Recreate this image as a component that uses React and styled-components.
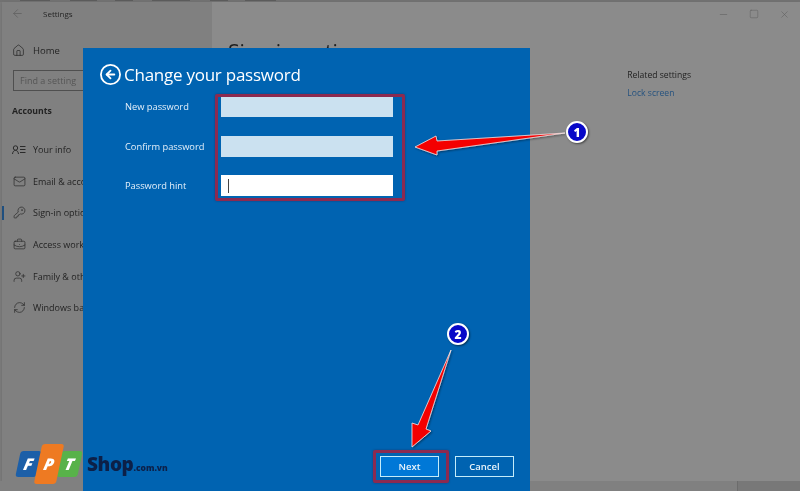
import React from "react";
import styled, { createGlobalStyle } from "styled-components";
import { Home, Mail, KeyRound, BriefcaseBusiness, UserPlus, RefreshCw, ArrowLeft, Minus, Square, X, CircleArrowLeft } from "lucide-react";

const Global = createGlobalStyle`
  html, body { margin: 0; padding: 0; background: #7b7b7b; }
  * { box-sizing: border-box; }
  body { font-family: "Open Sans", "Noto Sans", sans-serif; }
`;

const Page = styled.div`
  position: relative;
  width: 800px;
  height: 491px;
  overflow: hidden;
  background: #7b7b7b;
  display: flex;
  flex-direction: column;
  filter: blur(0.3px);
`;
const TopStrip = styled.div`
  height: 2px;
  flex: none;
  background: #727272;
  display: flex;
`;
const TopMark = styled.span`
  width: ${(p) => p.$w}px;
  margin-left: ${(p) => p.$m}px;
  height: 1px;
  background: #5c5c5c;
`;
const Window = styled.div`
  margin-left: 2px;
  height: 479px;
  flex: none;
  display: flex;
  background: #8b8b8b;
  box-shadow: 0 1px 2px #6a6a6a;
`;
const BottomStrip = styled.div`
  flex: 1;
  display: flex;
  justify-content: flex-end;
  background: #808080;
`;
const BottomEnd = styled.div`
  width: 63px;
  background: #787878;
  border-left: 1px solid #6c6c6c;
`;
const Sidebar = styled.aside`
  width: 210px;
  flex: none;
  background: #808080;
  color: #232323;
  font-size: 9px;
  display: flex;
  flex-direction: column;
`;
const TitleRow = styled.div`
  height: 22px;
  display: flex;
  align-items: center;
  gap: 19px;
  padding-left: 9px;
  color: #616161;
`;
const TitleText = styled.span`
  color: #252525;
  font-size: 8px;
`;
const HomeRow = styled.div`
  margin-top: 15px;
  height: 22px;
  display: flex;
  align-items: center;
  gap: 8px;
  padding-left: 10px;
  font-size: 9.5px;
`;
const Search = styled.div`
  margin: 9px 0 0 11px;
  width: 130px;
  height: 21px;
  border: 1px solid #4f4f4f;
  padding-left: 6px;
  display: flex;
  align-items: center;
  color: #555;
  font-size: 9px;
`;
const Section = styled.div`
  margin: 10px 0 13px 10px;
  height: 20px;
  display: flex;
  align-items: center;
  font-weight: 700;
  font-size: 8.7px;
`;
const NavItem = styled.div`
  position: relative;
  height: 31.6px;
  display: flex;
  align-items: center;
  gap: 7px;
  padding-left: 10px;
  white-space: nowrap;
  font-size: 9px;
  &::before {
    content: "";
    display: ${(p) => (p.$active ? "block" : "none")};
    position: absolute;
    left: 0;
    top: 9px;
    width: 2px;
    height: 14px;
    background: #1f4f7f;
  }
`;
const NavIcon = styled.span`
  width: 14px;
  display: flex;
  justify-content: center;
  color: #2a2a2a;
`;
const Main = styled.main`
  flex: 1;
  position: relative;
  display: flex;
  color: #222;
`;
const Heading = styled.h1`
  margin: 36px 0 0 16px;
  font-size: 21px;
  font-weight: 400;
  line-height: 28px;
  color: #1d1d1d;
  white-space: nowrap;
`;
const Related = styled.div`
  margin: 67px 0 0 254px;
  display: flex;
  flex-direction: column;
  gap: 6px;
  font-size: 8.6px;
  white-space: nowrap;
`;
const LinkText = styled.span`
  color: #25527f;
`;
const WindowButtons = styled.div`
  position: absolute;
  top: 7px;
  right: 10px;
  display: flex;
  gap: 20px;
  color: #5e5e5e;
`;
const Dialog = styled.section`
  position: absolute;
  left: 83px;
  top: 48px;
  bottom: 0;
  width: 447px;
  background: #0063b1;
  color: #e4f0fa;
  display: flex;
  flex-direction: column;
  padding: 15px 16px 14px;
`;
const DialogHeader = styled.div`
  display: flex;
  align-items: center;
  gap: 2px;
  color: #fff;
  font-size: 17px;
  letter-spacing: -0.25px;
  line-height: 23px;
  white-space: nowrap;
`;
const FormGrid = styled.div`
  margin-top: 10px;
  margin-left: 26px;
  width: 268px;
  display: grid;
  grid-template-columns: 96px 172px;
  row-gap: 18.5px;
  position: relative;
`;
const Label = styled.label`
  height: 21px;
  display: flex;
  align-items: center;
  font-size: 9.3px;
  white-space: nowrap;
`;
const Field = styled.div`
  height: 21px;
  background: ${(p) => (p.$focused ? "#fff" : "#cbe1f0")};
  display: flex;
  align-items: center;
  padding-left: 7px;
`;
const Caret = styled.span`
  width: 1px;
  height: 14px;
  background: #444;
`;
const Highlight = styled.div`
  position: absolute;
  border: 3px solid #8c2a50;
  border-radius: 2px;
  box-shadow: 0 0 2px rgba(40, 20, 50, 0.5);
  pointer-events: none;
  left: ${(p) => p.$l}px;
  top: ${(p) => p.$t}px;
  right: ${(p) => p.$r}px;
  bottom: ${(p) => p.$b}px;
`;
const Footer = styled.div`
  margin-top: auto;
  display: flex;
  justify-content: flex-end;
  gap: 16px;
  position: relative;
`;
const Button = styled.button`
  position: relative;
  width: 59px;
  height: 21px;
  padding: 0;
  border: 1.5px solid #c4ecfa;
  background: ${(p) => (p.$primary ? "#0078d7" : "transparent")};
  color: #e8f4fb;
  font: 600 9.5px "Open Sans", sans-serif;
`;
const Overlay = styled.svg`
  position: absolute;
  left: 0;
  top: 0;
  width: 800px;
  height: 491px;
  pointer-events: none;
`;
const Badge = styled.div`
  position: absolute;
  left: ${(p) => p.$x - 11}px;
  top: ${(p) => p.$y - 11}px;
  width: 22px;
  height: 22px;
  border-radius: 50%;
  background: #0808c8;
  border: 2px solid #fff;
  box-shadow: 1px 1px 2px rgba(0, 0, 0, 0.5);
  color: #fff;
  display: flex;
  align-items: center;
  justify-content: center;
  font: 800 12px "Open Sans", sans-serif;
`;
const Logo = styled.div`
  position: absolute;
  left: 18px;
  top: 444px;
  height: 40px;
  display: flex;
  align-items: center;
`;
const Tile = styled.div`
  width: ${(p) => p.$w}px;
  height: ${(p) => p.$h}px;
  margin-right: ${(p) => p.$mr}px;
  position: relative;
  z-index: ${(p) => p.$z};
  background: ${(p) => p.$bg};
  border-radius: 3px;
  transform: skewX(-12deg);
  color: #fff;
  display: flex;
  align-items: center;
  justify-content: center;
  font: italic 800 16px "Open Sans", sans-serif;
`;
const Brand = styled.div`
  margin-left: 7px;
  color: #0c2048;
  font: 800 19px "Open Sans", sans-serif;
  letter-spacing: -0.4px;
  white-space: nowrap;
`;
const BrandSmall = styled.span`
  font-size: 8.5px;
  letter-spacing: 0;
`;

const YourInfoIcon = () => (
  <svg width="14" height="12" viewBox="0 0 14 12" fill="none" stroke="currentColor" strokeWidth="1">
    <circle cx="3.5" cy="4" r="2.2" />
    <path d="M0.5 10c.3-2.4 1.4-3.6 3-3.6S6.2 7.6 6.500 10M8 2.500h5.500M8 5.500h5.500M8 8.500h5.500" />
  </svg>
);

const nav = [
  { t: "Your info", i: <YourInfoIcon /> },
  { t: "Email & accounts", i: <Mail size={13} strokeWidth={1.3} /> },
  { t: "Sign-in options", i: <KeyRound size={13} strokeWidth={1.3} />, active: true },
  { t: "Access work or school", i: <BriefcaseBusiness size={13} strokeWidth={1.3} /> },
  { t: "Family & other users", i: <UserPlus size={13} strokeWidth={1.3} /> },
  { t: "Windows backup", i: <RefreshCw size={13} strokeWidth={1.3} /> },
];

const topMarks = [
  { m: 20, w: 30 },
  { m: 20, w: 27 },
  { m: 18, w: 18 },
  { m: 19, w: 38 },
  { m: 20, w: 18 },
  { m: 17, w: 31 },
];

export default function App() {
  return (
    <Page>
      <Global />
      <TopStrip>
        {topMarks.map((k) => (
          <TopMark key={k.m + "-" + k.w} $m={k.m} $w={k.w} />
        ))}
      </TopStrip>
      <Window>
        <Sidebar>
          <TitleRow>
            <ArrowLeft size={13} strokeWidth={1.5} />
            <TitleText>Settings</TitleText>
          </TitleRow>
          <HomeRow>
            <Home size={13} strokeWidth={1.3} />
            Home
          </HomeRow>
          <Search>Find a setting</Search>
          <Section>Accounts</Section>
          {nav.map((n) => (
            <NavItem key={n.t} $active={n.active}>
              <NavIcon>{n.i}</NavIcon>
              {n.t}
            </NavItem>
          ))}
        </Sidebar>
        <Main>
          <Heading>Sign-in options</Heading>
          <Related>
            <span>Related settings</span>
            <LinkText>Lock screen</LinkText>
          </Related>
          <WindowButtons>
            <Minus size={11} strokeWidth={1.2} />
            <Square size={10} strokeWidth={1.2} />
            <X size={11} strokeWidth={1.2} />
          </WindowButtons>
        </Main>
      </Window>
      <BottomStrip>
        <BottomEnd />
      </BottomStrip>
      <Dialog>
        <DialogHeader>
          <CircleArrowLeft size={23} strokeWidth={1.9} />
          Change your password
        </DialogHeader>
        <FormGrid>
          <Label>New password</Label>
          <Field />
          <Label>Confirm password</Label>
          <Field />
          <Label>Password hint</Label>
          <Field $focused>
            <Caret />
          </Field>
          <Highlight $l={90} $t={-2} $r={-12} $b={-5} />
        </FormGrid>
        <Footer>
          <Button $primary>
            Next
            <Highlight $l={-8} $t={-7} $r={-11} $b={-7} />
          </Button>
          <Button>Cancel</Button>
        </Footer>
      </Dialog>
      <Overlay viewBox="0 0 800 491">
        <defs>
          <filter id="s" x="-10%" y="-10%" width="120%" height="120%">
            <feDropShadow dx="1" dy="1" stdDeviation="0.8" floodColor="#000" floodOpacity="0.45" />
          </filter>
        </defs>
        <g filter="url(#s)" fill="#f40000" stroke="#f2e6e6" strokeWidth="0.8" strokeLinejoin="round">
          <path d="M565 133 L437 151 L437 155 L415 147 L436 136 L437 141 Z" />
          <path d="M451 350 L426 429 L431 431 L412 447 L412 423 L418 425 Z" />
        </g>
      </Overlay>
      <Badge $x={577} $y={132}>1</Badge>
      <Badge $x={458} $y={334}>2</Badge>
      <Logo>
        <Tile $w={21} $h={26} $mr={-1} $z={1} $bg="#1c5fa8">F</Tile>
        <Tile $w={22} $h={40} $mr={-1} $z={2} $bg="#ee7a22">P</Tile>
        <Tile $w={21} $h={26} $mr={0} $z={1} $bg="#58b24a">T</Tile>
        <Brand>
          Shop<BrandSmall>.com.vn</BrandSmall>
        </Brand>
      </Logo>
    </Page>
  );
}
